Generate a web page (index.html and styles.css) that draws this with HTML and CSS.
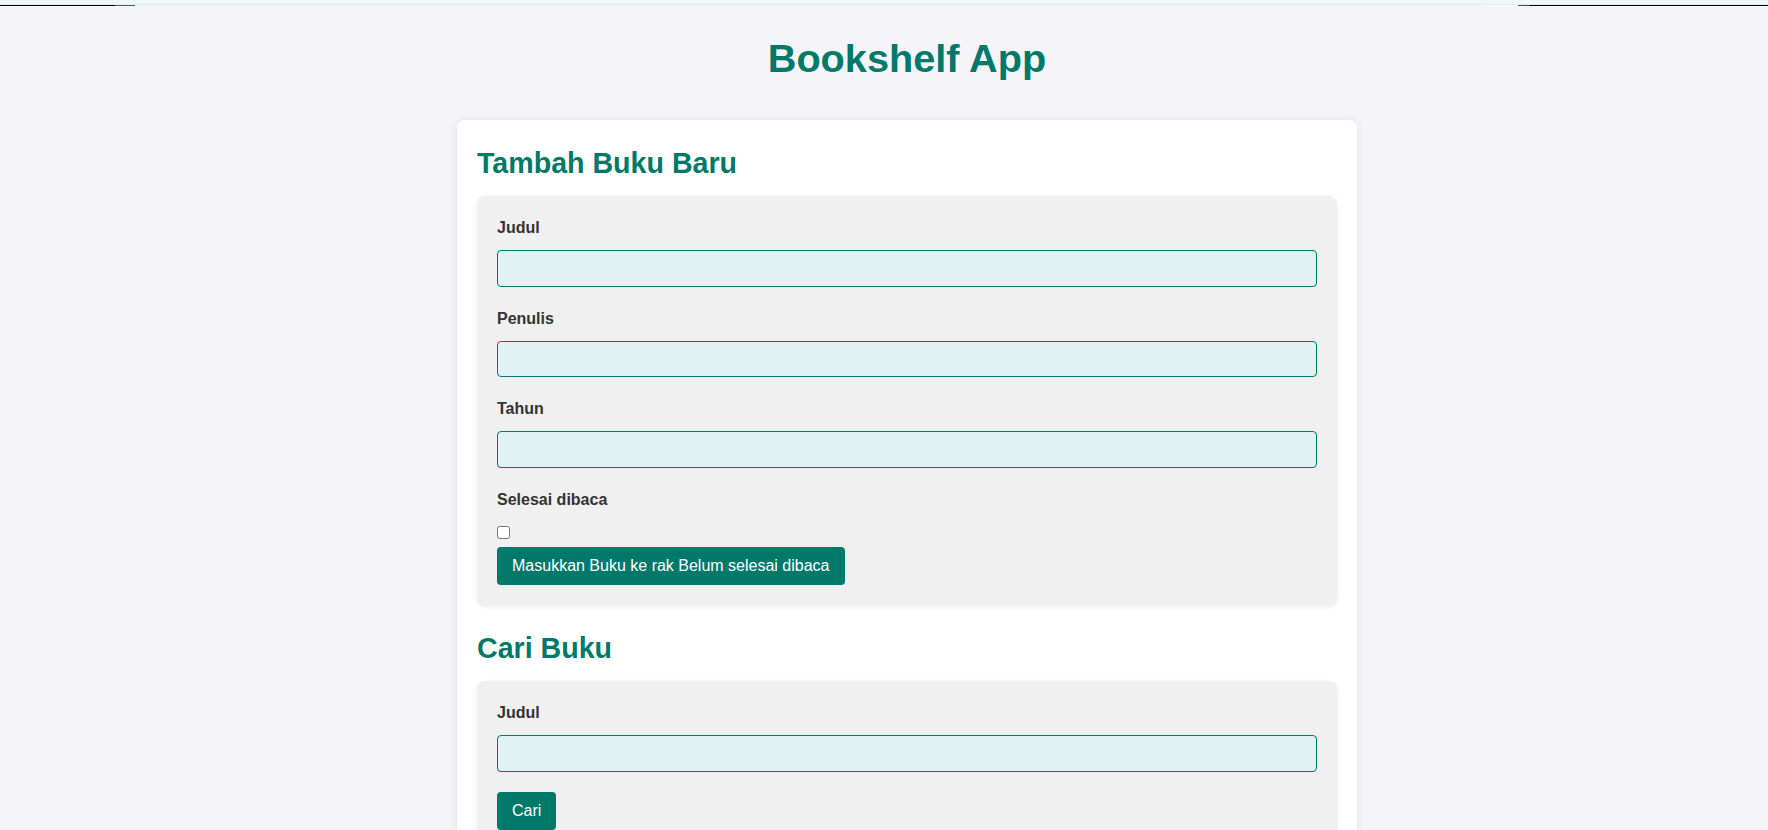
FILE: index.html
```html
<!DOCTYPE html>
<html lang="id">
<head>
<meta charset="utf-8">
<title>Bookshelf App</title>
<link rel="stylesheet" href="styles.css">
</head>
<body>
<div class="topbar"></div>
<div class="topline"></div>
<main class="page">
  <h1 class="app-title">Bookshelf App</h1>
  <div class="card">
    <section class="section">
      <h2 class="section-title">Tambah Buku Baru</h2>
      <form class="form-box">
        <div class="group">
          <label class="label" for="judul">Judul</label>
          <input class="text-input" id="judul" type="text">
        </div>
        <div class="group">
          <label class="label" for="penulis">Penulis</label>
          <input class="text-input" id="penulis" type="text">
        </div>
        <div class="group">
          <label class="label" for="tahun">Tahun</label>
          <input class="text-input" id="tahun" type="number">
        </div>
        <div class="group-check">
          <label class="label label-check" for="selesai">Selesai dibaca</label>
          <input class="check" id="selesai" type="checkbox">
        </div>
        <button class="btn" type="button">Masukkan Buku ke rak Belum selesai dibaca</button>
      </form>
    </section>
    <section class="section">
      <h2 class="section-title">Cari Buku</h2>
      <form class="form-box">
        <div class="group-search">
          <label class="label" for="cari">Judul</label>
          <input class="text-input" id="cari" type="text">
        </div>
        <button class="btn" type="button">Cari</button>
      </form>
    </section>
  </div>
</main>
</body>
</html>
```
FILE: styles.css
```css
html, body {
  margin: 0;
  padding: 0;
}
body {
  background: #f4f4f9;
  font-family: "Liberation Sans", Arial, sans-serif;
  color: #333;
}
.topbar {
  height: 4px;
  background: #eef8f9;
  border-bottom: 1px solid #dcefef;
}
.topline {
  height: 1px;
  background: linear-gradient(to right,
    #000 0, #000 115px,
    #5a5a5a 115px, #4a5a5a 130px,
    #00796b 130px, #00796b 135px,
    transparent 135px, transparent 1483px,
    #ffffff 1483px, #ffffff 1518px,
    #555 1518px, #444 1530px,
    #000 1530px, #000 100%);
}
.page {
  padding-left: 46px;
}
.app-title {
  margin: 30px 0 39px;
  text-align: center;
  font-size: 39.7px;
  font-weight: 700;
  line-height: 45px;
  color: #00796b;
}
.card {
  width: 900px;
  box-sizing: border-box;
  margin: 0 auto;
  padding: 27px 20px 0;
  background: #fff;
  border-radius: 8px;
  box-shadow: 0 0 10px rgba(0, 0, 0, 0.08);
}
.section-title {
  margin: 0 0 16px;
  font-size: 28.6px;
  line-height: 33px;
  font-weight: 700;
  color: #00796b;
}
.form-box {
  margin: 0 0 26px;
  padding: 23px 20px 21px;
  background: #f0f0f0;
  border-radius: 8px;
  box-shadow: 0 1px 4px rgba(0, 0, 0, 0.08);
}
.group {
  margin-bottom: 23px;
}
.label {
  display: block;
  margin-bottom: 13px;
  font-size: 16px;
  font-weight: 700;
  line-height: 18px;
  color: #333;
}
.label-check {
  margin-bottom: 17.5px;
}
.text-input {
  display: block;
  width: 100%;
  height: 36.5px;
  box-sizing: border-box;
  margin: 0;
  padding: 0 8px;
  background: #e0f2f1;
  border: 1px solid #00796b;
  border-radius: 4px;
  font-family: inherit;
  font-size: 16px;
}
.check {
  display: block;
  width: 13px;
  height: 13px;
  margin: 0 0 8px;
}
.group-search {
  margin-bottom: 20.5px;
}
.btn {
  display: block;
  height: 38px;
  box-sizing: border-box;
  padding: 0 15px;
  background: #00796b;
  color: #fff;
  border: none;
  border-radius: 4px;
  font-family: "Liberation Sans", Arial, sans-serif;
  font-size: 16px;
  line-height: 18px;
  cursor: pointer;
}
```
